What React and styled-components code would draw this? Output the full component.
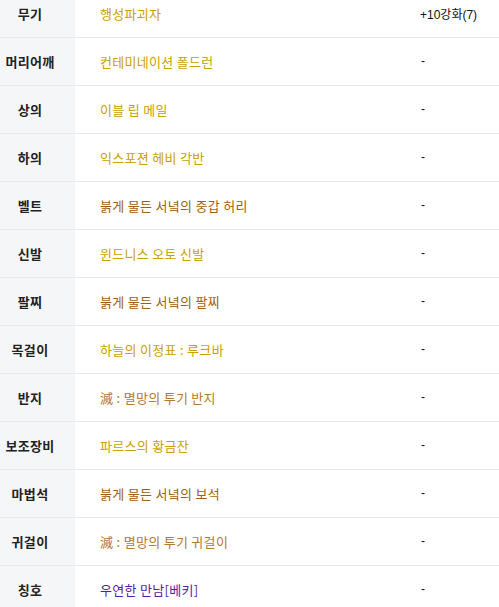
import React from 'react';
import styled, { createGlobalStyle } from 'styled-components';

const GlobalStyle = createGlobalStyle`
  html, body {
    margin: 0;
    padding: 0;
    background: #ffffff;
    overflow: hidden;
  }
  body {
    font-family: "Noto Sans CJK KR", "Noto Sans", sans-serif;
  }
`;

const Table = styled.div`
  width: 499px;
  margin-top: -10px;
  display: flex;
  flex-direction: column;
`;

const Row = styled.div`
  display: grid;
  grid-template-columns: 75px 1fr 79px;
  height: 48px;
  border-bottom: 1px solid #e8e9eb;
  box-sizing: border-box;
  align-items: stretch;
`;

const Label = styled.div`
  background: #f5f6f8;
  display: flex;
  align-items: center;
  justify-content: center;
  padding-right: 15px;
  padding-bottom: 1px;
  font-size: 13px;
  font-weight: 700;
  color: #222;
  letter-spacing: 0.3px;
`;

const ItemName = styled.div`
  display: flex;
  align-items: center;
  padding-left: 25px;
  padding-bottom: 1px;
  font-size: 13px;
  color: ${p => p.$color};
  letter-spacing: 0.3px;
`;

const Extra = styled.div`
  display: flex;
  align-items: center;
  padding-bottom: 1px;
  font-size: 12px;
  color: #111;
  font-family: "Liberation Sans", "Noto Sans CJK KR", sans-serif;
  padding-left: ${p => (p.$dash ? '1px' : '0')};
`;

const GOLD = '#caa000';
const RED = '#a25e0a';
const RUIN = '#b3782c';
const PURPLE = '#5a1aa6';

const rows = [
  ['무기', '행성파괴자', GOLD, '+10강화(7)'],
  ['머리어깨', '컨테미네이션 폴드런', GOLD, '-'],
  ['상의', '이블 립 메일', GOLD, '-'],
  ['하의', '익스포젼 헤비 각반', GOLD, '-'],
  ['벨트', '붉게 물든 서녘의 중갑 허리', RED, '-'],
  ['신발', '윈드니스 오토 신발', GOLD, '-'],
  ['팔찌', '붉게 물든 서녘의 팔찌', RED, '-'],
  ['목걸이', '하늘의 이정표 : 루크바', GOLD, '-'],
  ['반지', '滅 : 멸망의 투기 반지', RUIN, '-'],
  ['보조장비', '파르스의 황금잔', GOLD, '-'],
  ['마법석', '붉게 물든 서녘의 보석', RED, '-'],
  ['귀걸이', '滅 : 멸망의 투기 귀걸이', RUIN, '-'],
  ['칭호', '우연한 만남[베키]', PURPLE, '-'],
];

export default function App() {
  return (
    <>
      <GlobalStyle />
      <Table>
        {rows.map(([label, name, color, extra]) => (
          <Row key={label}>
            <Label>{label}</Label>
            <ItemName $color={color}>{name}</ItemName>
            <Extra $dash={extra === '-'}>{extra}</Extra>
          </Row>
        ))}
      </Table>
    </>
  );
}
